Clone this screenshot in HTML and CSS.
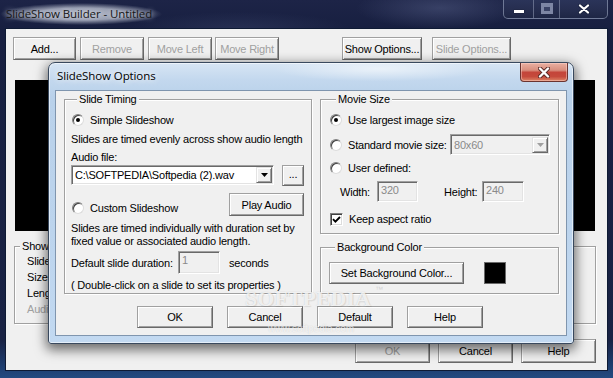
FILE: index.html
```html
<!DOCTYPE html>
<html>
<head>
<meta charset="utf-8">
<title>SlideShow Builder</title>
<link rel="stylesheet" href="styles.css">
</head>
<body>
<div class="desk">
  <div class="win">
    <div class="tbar">
      <span class="ttl">SlideShow Builder - Untitled</span>
      <div class="caps">
        <span class="cap cmin"><i></i></span>
        <span class="cap cmax"><i></i></span>
        <span class="cap cclose"><svg width="12" height="10" viewBox="0 0 12 10"><path d="M2 1.5 L10 8.5 M10 1.5 L2 8.5" stroke="#1b2440" stroke-width="4" stroke-linecap="round"/><path d="M2 1.5 L10 8.5 M10 1.5 L2 8.5" stroke="#fff" stroke-width="2.2" stroke-linecap="round"/></svg></span>
      </div>
    </div>
    <div class="client">
      <div class="toolbar">
        <div class="btn tb-add">Add...</div>
        <div class="btn dis tb-rem">Remove</div>
        <div class="btn dis tb-ml">Move Left</div>
        <div class="btn dis tb-mr">Move Right</div>
        <div class="btn tb-show">Show Options...</div>
        <div class="btn dis tb-slide">Slide Options...</div>
      </div>
      <div class="preview"></div>
      <div class="grp g-show">
        <div class="lgd">Show Info</div>
        <div class="srow">Slides:</div>
        <div class="srow">Size:</div>
        <div class="srow">Length:</div>
        <div class="srow dtext">Audio:</div>
      </div>
      <div class="mbtns">
        <div class="btn dis mb">OK</div>
        <div class="btn mb">Cancel</div>
        <div class="btn mb">Help</div>
      </div>
    </div>
  </div>

  <div class="dlg">
    <div class="dtbar">
      <span class="dttl">SlideShow Options</span>
      <span class="dclose"><svg width="12" height="11" viewBox="0 0 12 11"><path d="M2 1.5 L10 9.5 M10 1.5 L2 9.5" stroke="#5a2a26" stroke-width="4.2" stroke-linecap="round"/><path d="M2 1.5 L10 9.5 M10 1.5 L2 9.5" stroke="#fff" stroke-width="2.4" stroke-linecap="round"/></svg></span>
    </div>
    <div class="dclient">
      <div class="grps">
        <div class="grp g-timing">
          <div class="lgd">Slide Timing</div>
          <div class="rrow r-simple"><span class="radio on"></span><span>Simple Slideshow</span></div>
          <div class="txt t-even">Slides are timed evenly across show audio length</div>
          <div class="txt t-audio">Audio file:</div>
          <div class="audio-row">
            <div class="combo c-audio"><span class="cval">C:\SOFTPEDIA\Softpedia (2).wav</span><span class="cbtn"><svg width="7" height="4" viewBox="0 0 7 4"><path d="M0 0 H7 L3.5 4 Z" fill="#000"/></svg></span></div>
            <div class="btn b-dots">...</div>
          </div>
          <div class="custom-row">
            <div class="rrow"><span class="radio"></span><span>Custom Slideshow</span></div>
            <div class="btn b-play">Play Audio</div>
          </div>
          <div class="txt t-indiv">Slides are timed individually with duration set by<br>fixed value or associated audio length.</div>
          <div class="dur-row"><span class="dur-lbl">Default slide duration:</span><div class="edit e-dur">1</div><span>seconds</span></div>
          <div class="txt t-dbl">( Double-click on a slide to set its properties )</div>
        </div>
        <div class="rcol">
          <div class="grp g-movie">
            <div class="lgd">Movie Size</div>
            <div class="rrow r-largest"><span class="radio on"></span><span>Use largest image size</span></div>
            <div class="std-row">
              <div class="rrow"><span class="radio"></span><span>Standard movie size:</span></div>
              <div class="combo c-std"><span class="cval">80x60</span><span class="cbtn"><svg width="7" height="4" viewBox="0 0 7 4"><path d="M0 0 H7 L3.5 4 Z" fill="#a0a0a0"/></svg></span></div>
            </div>
            <div class="rrow r-user"><span class="radio"></span><span>User defined:</span></div>
            <div class="wh-row">
              <span class="wlbl">Width:</span><div class="edit e-w">320</div>
              <span class="hlbl">Height:</span><div class="edit e-h">240</div>
            </div>
            <div class="rrow r-keep"><span class="check"><svg width="9" height="9" viewBox="0 0 9 9"><path d="M1 4.2 L3.4 6.6 L8 2" fill="none" stroke="#000" stroke-width="1.9"/></svg></span><span>Keep aspect ratio</span></div>
          </div>
          <div class="grp g-bg">
            <div class="lgd">Background Color</div>
            <div class="bg-row">
              <div class="btn b-setbg">Set Background Color...</div>
              <div class="swatch"></div>
            </div>
          </div>
        </div>
      </div>
      <div class="dbtns">
        <div class="btn db">OK</div>
        <div class="btn db">Cancel</div>
        <div class="btn db">Default</div>
        <div class="btn db">Help</div>
      </div>
    </div>
  </div>

  <div class="wm"><span class="wm-big">SOFTPEDIA</span><span class="wm-tm">™</span><span class="wm-url">www.softpedia.com</span></div>
</div>
</body>
</html>
```

FILE: styles.css
```css
* { box-sizing: border-box; margin: 0; padding: 0; }
html, body { width: 613px; height: 378px; overflow: hidden; }
body {
  background: #1a2244;
  font-family: "Liberation Sans", Arial, sans-serif;
  font-size: 11px;
  letter-spacing: -0.2px;
  color: #000;
}
.desk { position: relative; width: 613px; height: 378px; }

/* ---------- main window ---------- */
.win {
  width: 613px; height: 378px;
  display: flex; flex-direction: column;
  background:
    radial-gradient(ellipse 120px 30px at 440px 8px, rgba(90,100,140,0.45), rgba(90,100,140,0) 70%),
    radial-gradient(ellipse 160px 26px at 240px 30px, rgba(70,80,120,0.35), rgba(70,80,120,0) 70%),
    linear-gradient(180deg, #1d2447 0%, #171f40 8%, #192244 90%, #1d3a6a 96%, #234a80 100%);
}
.tbar { height: 28px; display: flex; justify-content: space-between; align-items: flex-start; }
.ttl {
  font-family: "Open Sans", "Noto Sans", sans-serif;
  font-size: 11.5px; letter-spacing: -0.1px;
  line-height: 14px; margin: 3px 0 0 0; padding: 4px 10px 4px 6px; color: #161616;
  background: radial-gradient(ellipse 50% 50% at 50% 50%, rgba(190,195,208,0.95) 0%, rgba(175,181,198,0.85) 55%, rgba(120,128,155,0) 100%);
  text-shadow: 0 0 5px rgba(225,229,238,0.9);
}
.caps {
  display: flex; height: 19px; margin-right: 5px;
  border: 1px solid rgba(170,180,205,0.55); border-top: none;
  border-radius: 0 0 5px 5px; overflow: hidden;
  background: linear-gradient(180deg, #2b3459 0%, #262e50 50%, #1e2645 100%);
}
.cap { display: flex; align-items: center; justify-content: center; height: 100%; }
.cmin { width: 30px; border-right: 1px solid rgba(170,180,205,0.45); }
.cmin i { display: block; width: 10px; height: 3px; background: #fff; margin-top: 5px; box-shadow: 0 0 1px #000; }
.cmax { width: 26px; border-right: 1px solid rgba(170,180,205,0.45); }
.cmax i { display: block; width: 12px; height: 11px; border: 3px solid #7d86a4; border-top-width: 4px; background: #3a4366; margin-top: -2px; }
.cclose { width: 47px; }

.client {
  margin: 0 5px; height: 343px;
  background: #f0f0f0;
  border: 1px solid #0e1a34;
  display: flex; flex-direction: column;
}
.toolbar { display: flex; margin: 8px 0 0 7px; height: 23px; }
.tb-add { width: 63px; }
.tb-rem { width: 64px; margin-left: 4px; }
.tb-ml { width: 64px; margin-left: 4px; }
.tb-mr { width: 64px; margin-left: 3px; }
.tb-show { width: 80px; margin-left: 63px; }
.tb-slide { width: 79px; margin-left: 10px; }

.preview { margin: 20px 0 0 9px; width: 580px; height: 151px; background: #000; }

.g-show { margin: 15px 0 0 8px; width: 582px; height: 78px; }
.g-show .lgd { margin-left: 5px; }
.srow { padding-left: 12px; line-height: 16px; }
.srow:first-of-type { margin-top: 2px; }
.dtext { color: #a0a0a0; }
.mbtns { display: flex; justify-content: flex-end; gap: 8px; margin-top: 15px; padding-right: 11px; }
.mb { width: 75px; height: 24px; }

/* ---------- common controls ---------- */
.btn {
  display: flex; align-items: center; justify-content: center;
  background: #f0f0f0;
  border: 1px solid; border-color: #a0a0a0 #696969 #696969 #a0a0a0;
  box-shadow: inset 1px 1px 0 #fff, inset -1px -1px 0 #a0a0a0;
  white-space: nowrap;
}
.btn.dis { color: #a0a0a0; }

.grp {
  border: 1px solid #a0a0a0;
  box-shadow: inset 1px 1px 0 #fff, 1px 1px 0 #fff;
}
.lgd {
  width: fit-content; margin: -7px 0 0 6px; padding: 0 2px;
  line-height: 13px; background: #f0f0f0;
}

.rrow { display: flex; align-items: center; height: 16px; gap: 6px; }
.radio {
  position: relative; flex: none;
  width: 12px; height: 12px; border-radius: 50%;
  background: #fff;
  border: 1px solid; border-color: #808080 #dcdcdc #dcdcdc #808080;
  box-shadow: inset 1px 1px 0 #404040;
}
.radio.on::after {
  content: ""; position: absolute; left: 3px; top: 3px;
  width: 4px; height: 4px; border-radius: 50%; background: #000;
}
.check {
  flex: none; width: 13px; height: 13px;
  display: flex; align-items: center; justify-content: center;
  background: #fff;
  border: 1px solid; border-color: #808080 #fff #fff #808080;
  box-shadow: inset 1px 1px 0 #404040, inset -1px -1px 0 #dcdcdc;
}
.txt { line-height: 13px; }

.combo, .edit {
  display: flex; align-items: center;
  border: 1px solid; border-color: #a0a0a0 #fff #fff #a0a0a0;
  box-shadow: inset 1px 1px 0 #696969, inset -1px -1px 0 #e3e3e3;
  background: #fff;
}
.cval { flex: 1; padding-left: 3px; white-space: nowrap; overflow: hidden; }
.cbtn {
  flex: none; width: 16px; height: 16px; margin-right: 1px;
  display: flex; align-items: center; justify-content: center;
  background: #f0f0f0;
  border: 1px solid; border-color: #e3e3e3 #696969 #696969 #e3e3e3;
  box-shadow: inset 1px 1px 0 #fff, inset -1px -1px 0 #a0a0a0;
}
.edit { background: #f0f0f0; color: #8a8a8a; padding-left: 3px; align-items: flex-start; padding-top: 2px; }

/* ---------- dialog ---------- */
.dlg {
  position: absolute; left: 48px; top: 62px;
  width: 526px; height: 282px;
  border: 1px solid #39495e; border-radius: 7px 7px 3px 3px;
  background:
    radial-gradient(ellipse 150px 18px at 330px 6px, rgba(255,255,255,0.55), rgba(255,255,255,0) 70%),
    linear-gradient(180deg, #d7e5f4 0%, #c3d8ee 6%, #b9d1ea 12%, #bcd4ed 60%, #c2d9f1 100%);
  box-shadow: inset 0 0 0 1px rgba(255,255,255,0.55), 0 4px 12px 2px rgba(0,0,0,0.55);
  display: flex; flex-direction: column;
}
.dtbar { height: 27px; display: flex; align-items: flex-start; }
.dttl {
  font-family: "Open Sans", "Noto Sans", sans-serif;
  font-size: 11.5px; letter-spacing: -0.1px;
  line-height: 14px; margin: 6px 0 0 8px; color: #000;
  text-shadow: 0 0 6px rgba(255,255,255,0.95), 0 0 10px rgba(255,255,255,0.8);
}
.dclose {
  margin-left: auto; margin-right: 5px;
  width: 48px; height: 19px;
  display: flex; align-items: center; justify-content: center;
  border: 1px solid #6b3430; border-top: none;
  border-radius: 0 0 4px 4px;
  background: linear-gradient(180deg, #eab0a2 0%, #d88f7e 40%, #c4453a 52%, #c54a3c 75%, #dc8466 100%);
  box-shadow: inset 0 0 0 1px rgba(255,220,210,0.45);
}
.dclient {
  margin: 0 6px; height: 246px;
  background: #f0f0f0;
  border: 1px solid #7f95ae;
  display: flex; flex-direction: column;
}
.grps { display: flex; gap: 8px; margin-top: 8px; padding-left: 8px; }
.g-timing { width: 248px; height: 195px; padding: 0 7px 0 6px; }
.r-simple { margin: 6px 0 0 1px; }
.t-even { margin-top: 5px; }
.t-audio { margin-top: 5px; }
.audio-row { display: flex; gap: 8px; margin-top: 1px; align-items: flex-start; }
.c-audio { width: 203px; height: 20px; }
.b-dots { width: 22px; height: 21px; padding-bottom: 3px; }
.custom-row { display: flex; align-items: flex-end; justify-content: space-between; margin-top: 7px; height: 23px; }
.custom-row .rrow { margin-left: 1px; }
.b-play { width: 75px; height: 23px; }
.t-indiv { margin-top: 6px; }
.dur-row { display: flex; align-items: center; margin-top: 3px; height: 23px; }
.dur-lbl { width: 107px; }
.e-dur { width: 42px; height: 23px; margin-right: 9px; }
.t-dbl { margin-top: 5px; }

.rcol { width: 239px; display: flex; flex-direction: column; }
.g-movie { height: 135px; padding: 0 8px 0 9px; }
.r-largest { margin-top: 6px; }
.std-row { display: flex; align-items: center; margin-top: 6px; height: 21px; }
.c-std { margin-left: auto; width: 100px; height: 21px; background: #f0f0f0; color: #8a8a8a; }
.r-user { margin-top: 5px; }
.wh-row { display: flex; align-items: center; margin: 5px 0 0 10px; height: 21px; }
.wlbl { width: 37px; }
.e-w { width: 41px; height: 21px; }
.hlbl { width: 38px; margin-left: 26px; }
.e-h { width: 42px; height: 21px; }
.r-keep { margin-top: 9px; }

.g-bg { margin-top: 13px; height: 47px; padding: 0 8px; }
.bg-row { display: flex; align-items: center; margin-top: 8px; }
.b-setbg { width: 135px; height: 22px; }
.swatch { width: 22px; height: 22px; margin-left: 20px; background: #000; border: 1px solid #6a6a6a; }

.dbtns { display: flex; gap: 14px; margin-top: 12px; padding-left: 81px; }
.db { width: 76px; height: 22px; }

/* ---------- watermark ---------- */
.wm { position: absolute; left: 245px; top: 290px; width: 140px; height: 44px; pointer-events: none; }
.wm-big {
  position: absolute; left: 0; top: 0;
  font-family: "Liberation Serif", serif; font-weight: bold; font-size: 22px; letter-spacing: 0;
  line-height: 17px;
  color: rgba(255,255,255,0.75);
  text-shadow: 0 0 1px rgba(120,120,120,0.35), 1px 1px 1px rgba(0,0,0,0.08);
}
.wm-tm { position: absolute; left: 130px; top: -4px; font-size: 8px; line-height: 8px; color: rgba(150,150,150,0.35); }
.wm-url {
  position: absolute; left: 23px; top: 34px;
  font-size: 10px; line-height: 10px; letter-spacing: 0;
  color: rgba(255,255,255,0.7);
  text-shadow: 0 0 1px rgba(120,120,120,0.3);
}
```
